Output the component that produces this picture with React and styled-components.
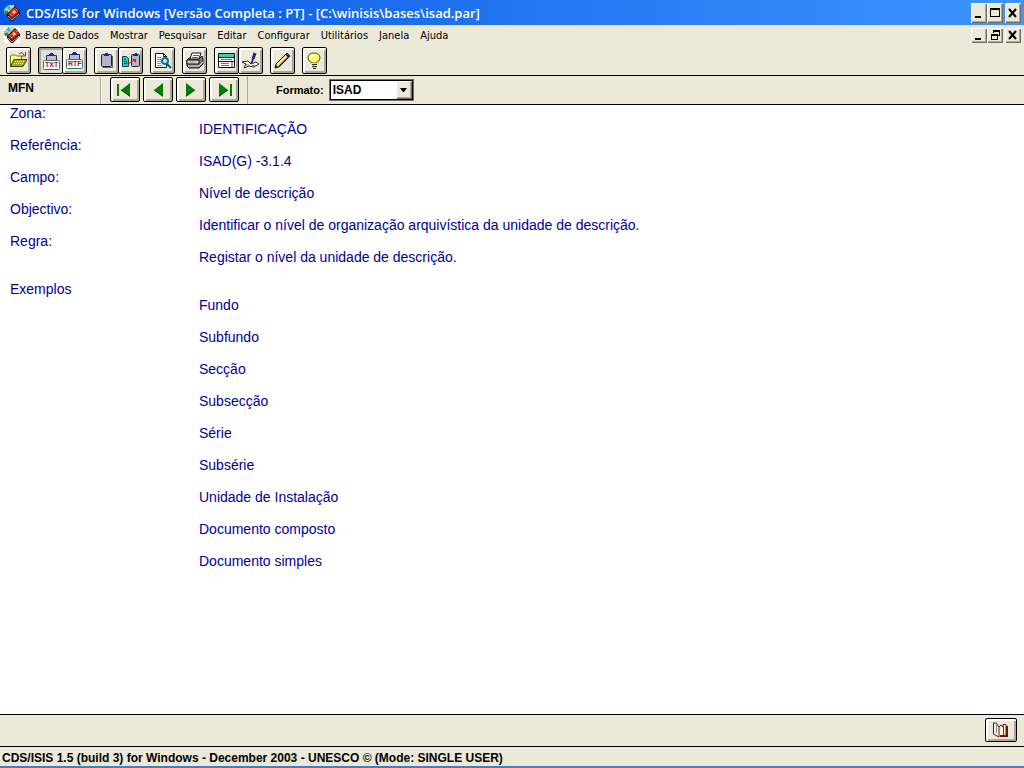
import React, { useState } from "react";
import styled, { createGlobalStyle, css } from "styled-components";

const menus = ["Base de Dados", "Mostrar", "Pesquisar", "Editar", "Configurar", "Utilitários", "Janela", "Ajuda"];

const fields = [
  { label: "Zona:", values: ["IDENTIFICAÇÃO"] },
  { label: "Referência:", values: ["ISAD(G) -3.1.4"] },
  { label: "Campo:", values: ["Nível de descrição"] },
  { label: "Objectivo:", values: ["Identificar o nível de organização arquivística da unidade de descrição."] },
  { label: "Regra:", values: ["Registar o nível da unidade de descrição."], last: true },
  {
    label: "Exemplos",
    values: [
      "Fundo",
      "Subfundo",
      "Secção",
      "Subsecção",
      "Série",
      "Subsérie",
      "Unidade de Instalação",
      "Documento composto",
      "Documento simples",
    ],
  },
];

const Icon = ({ w = 19, h = 19, children }) => (
  <svg width={w} height={h} viewBox={`0 0 ${w} ${h}`} fill="none" aria-hidden="true">
    {children}
  </svg>
);

const LogoIcon = () => (
  <Icon w={16} h={16}>
    <path d="M0 7 1 3 5 0h5l1 3-6 6H1z" fill="#c8d0c8" />
    <path d="M0 6h4l1 3H1z" fill="#189838" />
    <path d="M2 2l3-2 2 4-2 1z" fill="#30c0c0" />
    <path d="M6 0h3v3H7z" fill="#e0d890" />
    <path d="M0 4l4 1v1L0 5z" fill="#70c860" />
    <path d="M11 1 16 7v2L9 16H7L3 11V9z" fill="#200808" />
    <path d="M11 2 15 7 8 13 4 9z" fill="#e02818" />
    <path d="M4 11 8 15 15 9" stroke="#c8b8a8" />
    <path d="M10 5 12 7 10 9 8 7z" fill="#ffe0a0" />
    <path d="M6 9 8 11M12 4l1 1" stroke="#ff8068" />
  </Icon>
);

const OpenIcon = () => (
  <Icon>
    <path d="M1.5 15V5l1-1h4l1 1h5v3" fill="#ffff90" stroke="#707000" />
    <path d="M1.5 15.500 5 8.500h13l-4 7z" fill="#a8a820" stroke="#404000" />
    <path d="M6 10.500h9M5 12.500h9" stroke="#ffff70" strokeDasharray="1 1" />
    <path d="M10 3q3-3 5 1M16.500 1v4h-4" stroke="#902020" />
  </Icon>
);

const ClipText = ({ text }) => (
  <Icon>
    <path d="M4.5 10V3.500h10V10" fill="#b8c0d8" stroke="#303038" />
    <path d="M7 4V2h1V1h3v1h1v2z" fill="#2020a0" />
    <rect x="1.5" y="8.5" width="16" height="9" rx="1" fill="#fff" stroke="#287878" />
    <IconText x="3" y="15">{text}</IconText>
  </Icon>
);

const ClipIcon = () => (
  <Icon>
    <rect x="4.5" y="3.5" width="10" height="12" rx="1" fill="#b4b4cc" stroke="#202028" />
    <path d="M15.500 5v11.500H6" stroke="#606068" />
    <path d="M7 5V3h1V2h3v1h1v2z" fill="#2020a0" />
  </Icon>
);

const ClipSendIcon = () => (
  <Icon w={20}>
    <path d="M1.500 5.500h4l2 2v8h-6z" fill="#30c8c0" stroke="#104848" />
    <path d="M3 8.500h2M3 10.500h3M3 12.500h3" stroke="#083838" />
    <rect x="10.5" y="3.5" width="8" height="12" rx="1" fill="#b4b4cc" stroke="#282830" />
    <path d="M12 5V3h2V2h2v1h1v2z" fill="#2020a0" />
    <path d="M6 12h3l4-3" stroke="#d01818" />
    <path d="M11 8h4v4z" fill="#e01818" />
  </Icon>
);

const PreviewIcon = () => (
  <Icon>
    <path d="M2.5 2.5h8l3 3v11h-11z" fill="#fff" stroke="#181818" />
    <path d="M10.5 2v3.500H14" stroke="#181818" />
    <path d="M4 6.500h4M4 8.500h5M4 10.500h4M4 12.500h4M4 14.500h5" stroke="#909090" />
    <circle cx="12" cy="10" r="3" fill="#b8f0f0" stroke="#107888" strokeWidth="2" />
    <path d="m14 13 4 4" stroke="#105878" strokeWidth="2" />
  </Icon>
);

const PrintIcon = () => (
  <Icon>
    <path d="M2 9 4 7h11l2-2 1 2v6l-4 4H4l-2-2z" fill="#787878" stroke="#101010" />
    <path d="M5 8 7 2h9l-2 6z" fill="#fff" stroke="#101010" />
    <path d="M8 4.500h6M7 6.500h6" stroke="#606060" />
    <path d="M2 9h12v4H2z" fill="#d0d0c8" stroke="#101010" />
    <path d="M3 15h11l4-4" stroke="#e0e0d8" />
    <path d="M5 11h4" stroke="#b0a020" />
  </Icon>
);

const FormIcon = () => (
  <Icon>
    <path d="M1.5 2.5h16v14h-16z" fill="#fff" stroke="#101018" />
    <path d="M2 3h15v3H2z" fill="#40d0a8" />
    <path d="M2 6.500h15M2 10.500h15" stroke="#101018" />
    <path d="M4 8.500h11M4 12.500h8M4 14.500h8" stroke="#707078" />
    <path d="M14 11h2v5h-2z" fill="#a0a0a8" />
  </Icon>
);

const WriteIcon = () => (
  <Icon>
    <path d="m1 11 6-1 3 3 5-2 3 2-5 3-5-1-5 2 2-4z" fill="#fff" stroke="#282828" />
    <path d="M5 14h3M11 15l3-1" stroke="#806060" />
    <path d="M12 8 14 2" stroke="#202090" strokeWidth="3" />
    <path d="m10 13 2-5" stroke="#303080" strokeWidth="2" />
  </Icon>
);

const PencilIcon = () => (
  <Icon>
    <path d="M3 13 14 2l3 3L6 16l-4 1z" fill="#e0e060" stroke="#181818" />
    <path d="M5 13 14 4" stroke="#ffffb0" />
    <path d="M6 15 16 5" stroke="#602090" />
    <path d="m13 3 3 3" stroke="#501080" strokeWidth="2" />
    <path d="m2 17 1-3 2 2z" fill="#181818" />
  </Icon>
);

const BulbIcon = () => (
  <Icon>
    <path d="M7 12Q3 10 3 7q0-5 6-5t6 5q0 3-4 5z" fill="#ffff68" stroke="#505000" />
    <path d="M6 8q0-3 3-3" stroke="#fff" strokeWidth="2" />
    <path d="M7 12h5v5H7z" fill="#d8d8b0" />
    <path d="M7 13.500h5M7 15.500h5M8 17.500h3" stroke="#303030" />
  </Icon>
);

const BookIcon = () => (
  <Icon w={18} h={18}>
    <path d="M7 16V7l2-2 2 1V3h4v11l-3 1-2-1-3 2z" fill="#fff8d8" />
    <path d="M1.500 2v11L7 16V6L4 2z" fill="#fff" stroke="#601010" />
    <path d="M4.500 3v9" stroke="#a08078" />
    <path d="M7 6l2-2 2 2V3.500h3V14" stroke="#602020" />
    <path d="M11.500 5v9" stroke="#504038" />
    <path d="M15 5v10H8" stroke="#701010" strokeWidth="2" />
  </Icon>
);

const NavIcon = ({ back, edge }) => (
  <Icon w={18} h={14}>
    <g transform={back ? "translate(18 0) scale(-1 1)" : undefined}>
      <path d="M4 0v14l9-7z" fill="#008000" />
      <path d="M4 13l9-6" stroke="#004800" />
      {edge && <path d="M15 1h2v12h-2z" fill="#008000" />}
    </g>
  </Icon>
);

const WindowIcon = ({ kind }) => (
  <Icon w={12} h={12}>
    {kind === "min" && <path d="M2 9h6v2H2z" fill="#000" />}
    {kind === "max" && <path d="M1 1h10v9H1zM2 3v6h8V3z" fill="#000" fillRule="evenodd" />}
    {kind === "restore" && (
      <path d="M4 1h7v6H9V6h1V3H5v1H4zM2 5h7v6H2zM3 7v3h5V7z" fill="#000" fillRule="evenodd" />
    )}
    {kind === "close" && <path d="m2 2 7 8M9 2l-7 8" stroke="#000" strokeWidth="2" />}
  </Icon>
);

const WindowButtons = ({ tall, middle }) => (
  <WindowGroup>
    <WindowButton $tall={tall} aria-label="Minimizar"><WindowIcon kind="min" /></WindowButton>
    <WindowButton $tall={tall} aria-label="Restaurar"><WindowIcon kind={middle} /></WindowButton>
    <WindowButton $tall={tall} $apart aria-label="Fechar"><WindowIcon kind="close" /></WindowButton>
  </WindowGroup>
);

const App = () => {
  const [format, setFormat] = useState("ISAD");
  const [view, setView] = useState("TXT");

  return (
    <>
      <GlobalStyle />
      <Window>
        <TitleBar>
          <LogoIcon />
          <Title>CDS/ISIS for Windows [Versão Completa : PT] - [C:\winisis\bases\isad.par]</Title>
          <WindowButtons tall middle="max" />
        </TitleBar>

        <MenuBar>
          <MenuLogo><LogoIcon /></MenuLogo>
          <MenuList>
            {menus.map((menu) => (
              <MenuButton key={menu}>{menu}</MenuButton>
            ))}
          </MenuList>
          <WindowButtons middle="restore" />
        </MenuBar>

        <Toolbar>
          <ToolButton aria-label="Abrir base"><OpenIcon /></ToolButton>
          <ToolPair>
            <ToolButton $pressed={view === "TXT"} onClick={() => setView("TXT")} aria-label="Texto">
              <ClipText text="TXT" />
            </ToolButton>
            <ToolButton $pressed={view === "RTF"} onClick={() => setView("RTF")} aria-label="RTF">
              <ClipText text="RTF" />
            </ToolButton>
          </ToolPair>
          <ToolPair>
            <ToolButton aria-label="Copiar"><ClipIcon /></ToolButton>
            <ToolButton aria-label="Copiar registo"><ClipSendIcon /></ToolButton>
          </ToolPair>
          <ToolButton aria-label="Pesquisar"><PreviewIcon /></ToolButton>
          <ToolButton aria-label="Imprimir"><PrintIcon /></ToolButton>
          <ToolPair>
            <ToolButton aria-label="Formulário"><FormIcon /></ToolButton>
            <ToolButton aria-label="Entrada de dados"><WriteIcon /></ToolButton>
          </ToolPair>
          <ToolButton aria-label="Editar"><PencilIcon /></ToolButton>
          <ToolButton aria-label="Ajuda"><BulbIcon /></ToolButton>
        </Toolbar>

        <RecordBar>
          <RecordLabel>MFN</RecordLabel>
          <NavGroup>
            <NavButton aria-label="Primeiro"><NavIcon back edge /></NavButton>
            <NavButton aria-label="Anterior"><NavIcon back /></NavButton>
            <NavButton aria-label="Seguinte"><NavIcon /></NavButton>
            <NavButton aria-label="Último"><NavIcon edge /></NavButton>
          </NavGroup>
          <FormatLabel htmlFor="format">Formato:</FormatLabel>
          <SelectBox>
            <Select id="format" value={format} onChange={(e) => setFormat(e.target.value)}>
              <option>ISAD</option>
            </Select>
            <SelectArrow>
              <Icon w={7} h={4}><path d="M0 0h7L4 4H3z" fill="#000" /></Icon>
            </SelectArrow>
          </SelectBox>
        </RecordBar>

        <Record>
          {fields.map((field) => (
            <React.Fragment key={field.label}>
              <FieldName>{field.label}</FieldName>
              <FieldValues $last={field.last}>
                {field.values.map((value) => (
                  <div key={value}>{value}</div>
                ))}
              </FieldValues>
            </React.Fragment>
          ))}
        </Record>

        <BottomBar>
          <BookButton aria-label="Dicionário"><BookIcon /></BookButton>
        </BottomBar>
        <StatusBar>CDS/ISIS 1.5 (build 3) for Windows - December 2003 - UNESCO © (Mode: SINGLE USER)</StatusBar>
      </Window>
    </>
  );
};

export default App;

const GlobalStyle = createGlobalStyle`
  * {
    box-sizing: border-box;
  }
  body {
    margin: 0;
    background: #ece9d8;
  }
  button {
    padding: 0;
    border: none;
    font: inherit;
    color: inherit;
  }
  svg {
    display: block;
    flex: none;
  }
`;

const raised = css`
  background: #ece9d8;
  box-shadow: inset 1px 1px #fff, inset -1px -1px #716f64, inset -2px -2px #aca899;
`;

/* toolbar buttons have a black outline, so the bevel inside is softer */
const outlined = css`
  border: 1px solid #000;
  border-radius: 2px;
  background: #ece9d8;
  box-shadow: inset 2px 2px #fff, inset -2px -2px #aca899;
`;

const Window = styled.div`
  display: flex;
  flex-direction: column;
  min-height: 100vh;
  background: #ece9d8;
  color: #000;
  font-family: "Liberation Sans", Arial, sans-serif;
  font-size: 11px;
`;

const TitleBar = styled.header`
  display: flex;
  align-items: center;
  gap: 6px;
  height: 25px;
  padding: 0 3px 0 4px;
  background: linear-gradient(90deg, #0655e0, #3d95ff);
`;

const Title = styled.h1`
  flex: 1;
  margin: 0;
  color: #fff;
  font-family: "Open Sans", "Noto Sans", sans-serif;
  font-size: 13px;
  font-weight: 600;
  line-height: 24px;
  white-space: nowrap;
`;

const WindowGroup = styled.div`
  display: flex;
`;

const WindowButton = styled.button`
  display: flex;
  align-items: center;
  justify-content: center;
  width: 16px;
  height: ${(props) => (props.$tall ? "20px" : "15px")};
  margin-left: ${(props) => (props.$apart ? "2px" : "0")};
  ${raised}
`;

const MenuBar = styled.nav`
  display: flex;
  align-items: center;
  height: 20px;
  padding: 0 3px 0 4px;
`;

const MenuLogo = styled.div`
  background: #fff;
`;

const MenuList = styled.div`
  display: flex;
  flex: 1;
  gap: 11px;
  padding-left: 5px;
  font-family: "DejaVu Sans Condensed", "DejaVu Sans", sans-serif;
`;

const MenuButton = styled.button`
  background: none;
  white-space: nowrap;
`;

const Toolbar = styled.div`
  display: flex;
  gap: 7px;
  height: 31px;
  padding: 2px 6px;
  border-bottom: 1px solid #000;
`;

const ToolPair = styled.div`
  display: flex;
  width: 49px;

  & > button + button {
    margin-left: -1px;
  }
`;

const ToolButton = styled.button`
  display: flex;
  flex: none;
  align-items: center;
  justify-content: center;
  width: 25px;
  height: 27px;
  ${outlined}
  ${(props) =>
    props.$pressed &&
    css`
      padding: 2px 0 0 1px;
      background: #e0dfe0;
      box-shadow: inset 2px 2px #aca899;
    `}
`;

const IconText = styled.text`
  fill: #a01020;
  font-family: "Liberation Sans", Arial, sans-serif;
  font-size: 7px;
  font-weight: 700;
`;

const RecordBar = styled.div`
  display: flex;
  height: 29px;
  border-bottom: 1px solid #000;
  font-weight: 700;
`;

const RecordLabel = styled.div`
  width: 101px;
  padding: 5px 8px;
  border-right: 1px solid #aca899;
  font-size: 12px;
`;

const NavGroup = styled.div`
  display: flex;
  gap: 3px;
  padding: 1px 8px;
  border-left: 1px solid #fff;
  border-right: 1px solid #aca899;
`;

const NavButton = styled.button`
  display: flex;
  align-items: center;
  justify-content: center;
  width: 30px;
  height: 25px;
  ${outlined}
`;

const FormatLabel = styled.label`
  padding: 8px 5px 0 28px;
`;

const SelectBox = styled.div`
  display: flex;
  position: relative;
  width: 85px;
  height: 22px;
  margin-top: 3px;
`;

const Select = styled.select`
  appearance: none;
  width: 100%;
  padding: 0 20px 0 3px;
  border: 1px solid #716f64;
  border-radius: 0;
  outline: none;
  background: #fff;
  box-shadow: inset 1px 1px #000, inset -1px -1px #000;
  color: #000;
  font: 700 12px "Liberation Sans", Arial, sans-serif;
`;

const SelectArrow = styled.span`
  display: flex;
  position: absolute;
  top: 2px;
  right: 2px;
  bottom: 2px;
  align-items: center;
  justify-content: center;
  width: 16px;
  pointer-events: none;
  ${raised}
`;

const Record = styled.dl`
  flex: 1;
  margin: 0;
  padding: 0 10px;
  background: #fff;
  color: #000098;
  font-size: 14px;
  line-height: 16px;
`;

const FieldName = styled.dt`
  margin: 0;
`;

const FieldValues = styled.dd`
  display: flex;
  flex-direction: column;
  gap: 16px;
  margin: 0 0 ${(props) => (props.$last ? "16px" : "0")} 189px;
`;

const BottomBar = styled.div`
  display: flex;
  justify-content: flex-end;
  height: 32px;
  padding: 3px 7px;
  border-top: 1px solid #000;
`;

const BookButton = styled.button`
  display: flex;
  align-items: center;
  justify-content: center;
  width: 32px;
  height: 24px;
  ${outlined}
`;

const StatusBar = styled.footer`
  height: 22px;
  padding: 4px 2px 0;
  border-top: 1px solid #000;
  border-bottom: 2px solid #3a7fd0;
  font-size: 12px;
  font-weight: 700;
  white-space: nowrap;
`;
